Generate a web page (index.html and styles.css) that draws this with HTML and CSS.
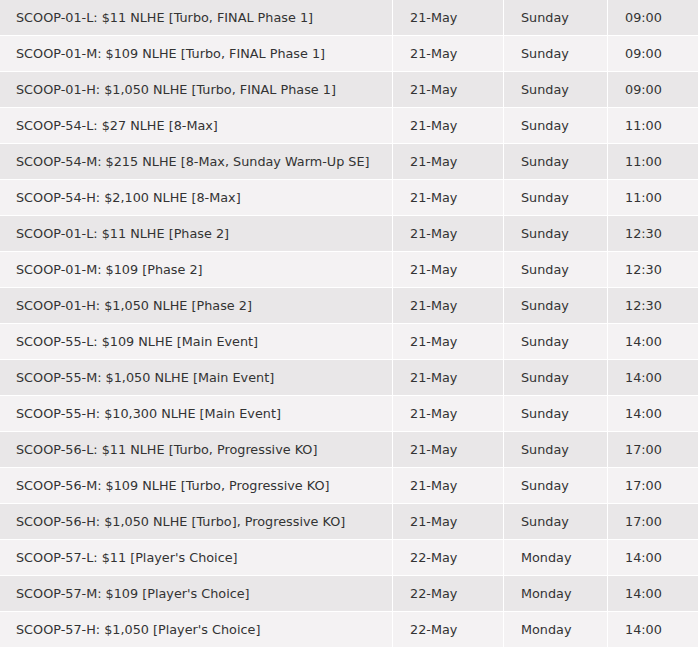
FILE: index.html
```html
<!DOCTYPE html>
<html>
<head>
<meta charset="utf-8">
<link rel="stylesheet" href="styles.css">
</head>
<body>
<div class="schedule">
  <div class="row"><div class="cell">SCOOP-01-L: $11 NLHE [Turbo, FINAL Phase 1]</div><div class="cell">21-May</div><div class="cell">Sunday</div><div class="cell">09:00</div></div>
  <div class="row"><div class="cell">SCOOP-01-M: $109 NLHE [Turbo, FINAL Phase 1]</div><div class="cell">21-May</div><div class="cell">Sunday</div><div class="cell">09:00</div></div>
  <div class="row"><div class="cell">SCOOP-01-H: $1,050 NLHE [Turbo, FINAL Phase 1]</div><div class="cell">21-May</div><div class="cell">Sunday</div><div class="cell">09:00</div></div>
  <div class="row"><div class="cell">SCOOP-54-L: $27 NLHE [8-Max]</div><div class="cell">21-May</div><div class="cell">Sunday</div><div class="cell">11:00</div></div>
  <div class="row"><div class="cell">SCOOP-54-M: $215 NLHE [8-Max, Sunday Warm-Up SE]</div><div class="cell">21-May</div><div class="cell">Sunday</div><div class="cell">11:00</div></div>
  <div class="row"><div class="cell">SCOOP-54-H: $2,100 NLHE [8-Max]</div><div class="cell">21-May</div><div class="cell">Sunday</div><div class="cell">11:00</div></div>
  <div class="row"><div class="cell">SCOOP-01-L: $11 NLHE [Phase 2]</div><div class="cell">21-May</div><div class="cell">Sunday</div><div class="cell">12:30</div></div>
  <div class="row"><div class="cell">SCOOP-01-M: $109 [Phase 2]</div><div class="cell">21-May</div><div class="cell">Sunday</div><div class="cell">12:30</div></div>
  <div class="row"><div class="cell">SCOOP-01-H: $1,050 NLHE [Phase 2]</div><div class="cell">21-May</div><div class="cell">Sunday</div><div class="cell">12:30</div></div>
  <div class="row"><div class="cell">SCOOP-55-L: $109 NLHE [Main Event]</div><div class="cell">21-May</div><div class="cell">Sunday</div><div class="cell">14:00</div></div>
  <div class="row"><div class="cell">SCOOP-55-M: $1,050 NLHE [Main Event]</div><div class="cell">21-May</div><div class="cell">Sunday</div><div class="cell">14:00</div></div>
  <div class="row"><div class="cell">SCOOP-55-H: $10,300 NLHE [Main Event]</div><div class="cell">21-May</div><div class="cell">Sunday</div><div class="cell">14:00</div></div>
  <div class="row"><div class="cell">SCOOP-56-L: $11 NLHE [Turbo, Progressive KO]</div><div class="cell">21-May</div><div class="cell">Sunday</div><div class="cell">17:00</div></div>
  <div class="row"><div class="cell">SCOOP-56-M: $109 NLHE [Turbo, Progressive KO]</div><div class="cell">21-May</div><div class="cell">Sunday</div><div class="cell">17:00</div></div>
  <div class="row"><div class="cell">SCOOP-56-H: $1,050 NLHE [Turbo], Progressive KO]</div><div class="cell">21-May</div><div class="cell">Sunday</div><div class="cell">17:00</div></div>
  <div class="row"><div class="cell">SCOOP-57-L: $11 [Player's Choice]</div><div class="cell">22-May</div><div class="cell">Monday</div><div class="cell">14:00</div></div>
  <div class="row"><div class="cell">SCOOP-57-M: $109 [Player's Choice]</div><div class="cell">22-May</div><div class="cell">Monday</div><div class="cell">14:00</div></div>
  <div class="row"><div class="cell">SCOOP-57-H: $1,050 [Player's Choice]</div><div class="cell">22-May</div><div class="cell">Monday</div><div class="cell">14:00</div></div>
</div>
</body>
</html>
```
FILE: styles.css
```css
html, body {
  margin: 0;
  padding: 0;
  background: #ffffff;
}
.schedule {
  width: 698px;
  font-family: "DejaVu Sans", Verdana, sans-serif;
  font-size: 12.8px;
  color: #333333;
}
.row {
  display: grid;
  grid-template-columns: 393px 111px 104px 1fr;
  height: 36px;
}
.row:nth-child(odd) .cell {
  background: #e9e7e8;
}
.row:nth-child(even) .cell {
  background: #f4f2f3;
}
.cell {
  box-sizing: border-box;
  border-right: 1px solid #ffffff;
  border-bottom: 1px solid #ffffff;
  padding-left: 16px;
  display: flex;
  align-items: center;
  white-space: nowrap;
}
.cell:last-child {
  border-right: none;
}
.cell:nth-child(n+2) {
  padding-left: 17px;
}
```
